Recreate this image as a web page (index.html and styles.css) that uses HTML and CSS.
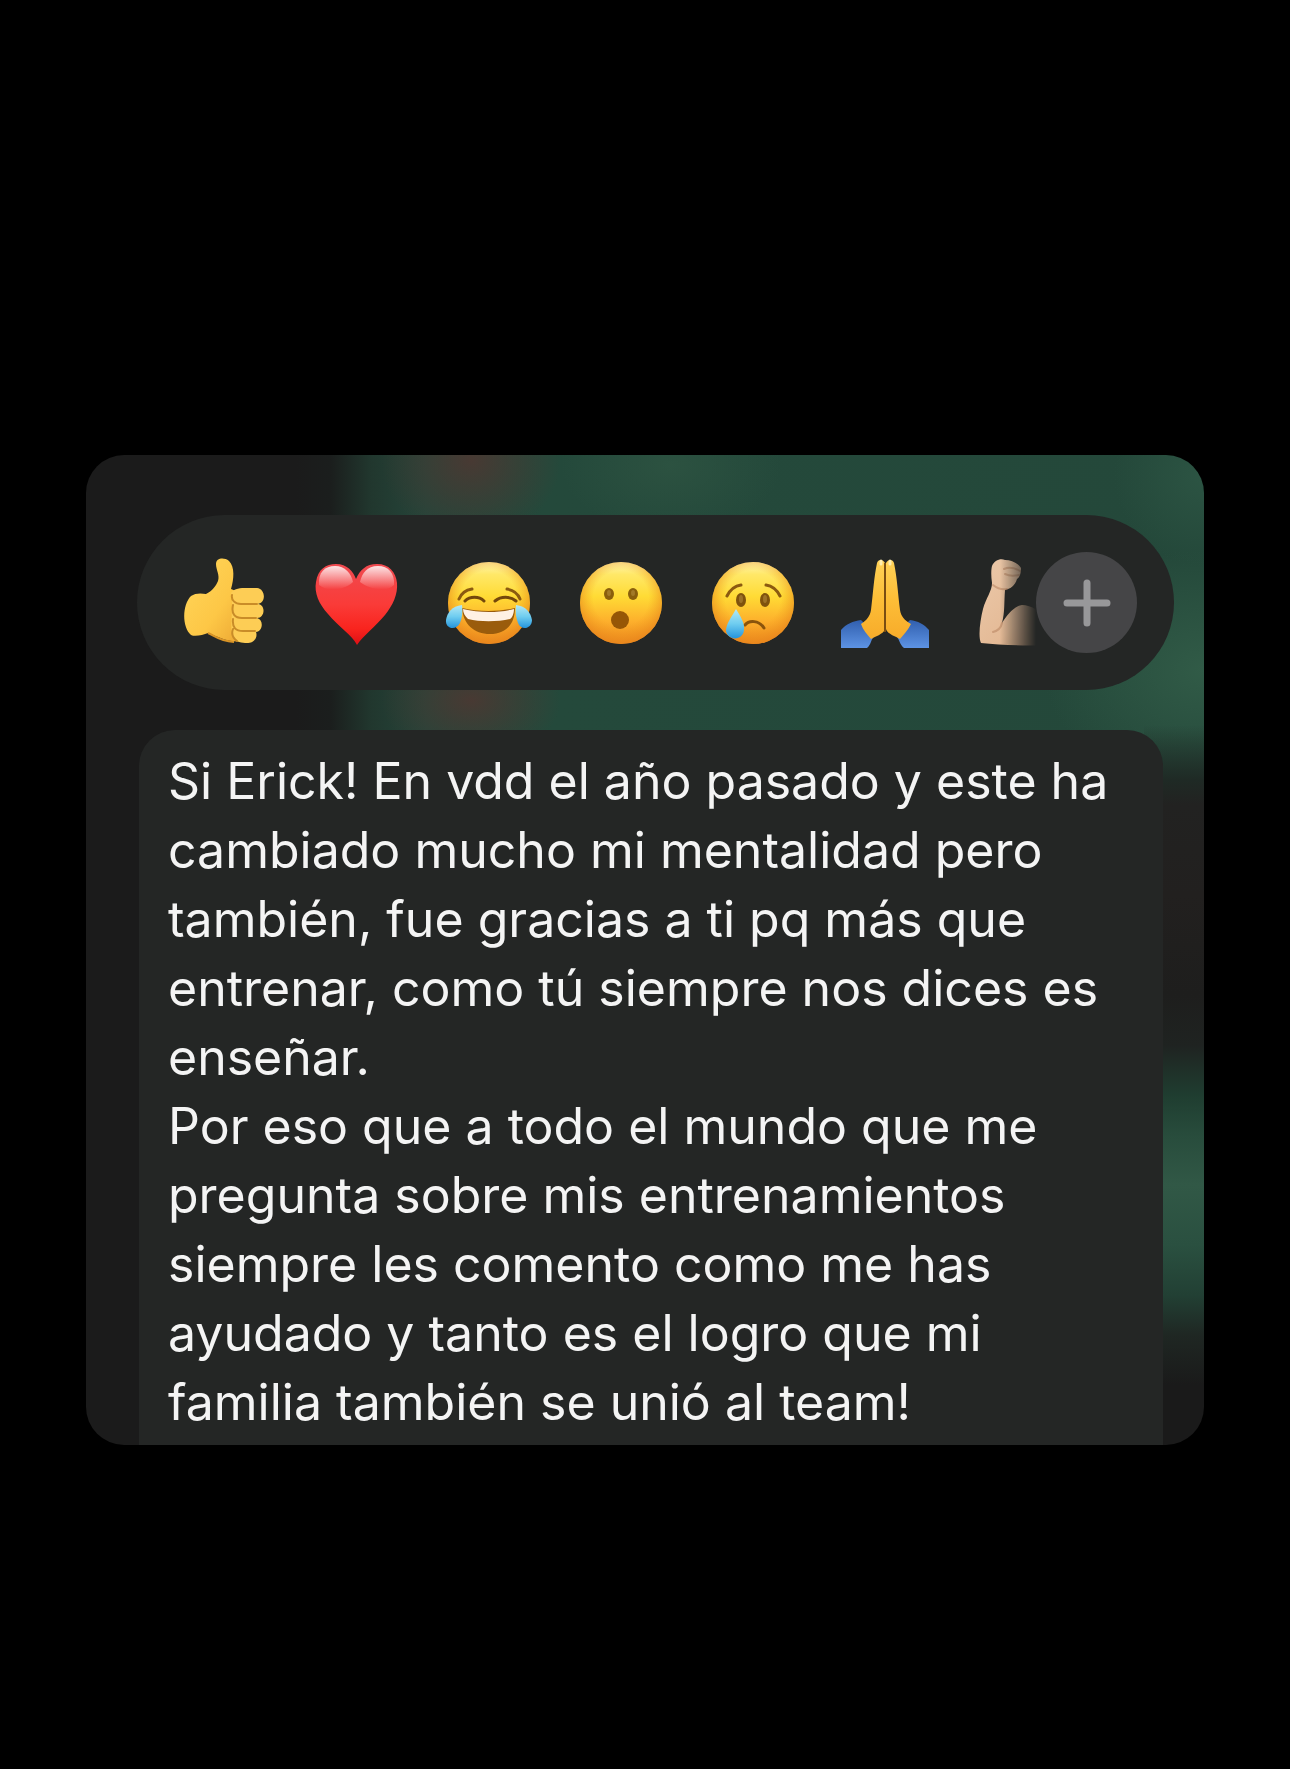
FILE: index.html
```html
<!DOCTYPE html>
<html lang="es">
	<head>
		<meta charset="utf-8" />
		<meta name="viewport" content="width=device-width, initial-scale=1" />
		<title>Mensaje</title>
		<link rel="stylesheet" href="styles.css">
	</head>
	<body>
		<!-- shared gradients -->
		<svg class="defs" width="0" height="0" aria-hidden="true">
			<defs>
				<linearGradient id="face" x1="0" y1="0" x2="0" y2="1">
					<stop offset="0" stop-color="#fff6b4" />
					<stop offset=".15" stop-color="#ffe868" />
					<stop offset=".42" stop-color="#ffdb35" />
					<stop offset=".72" stop-color="#fdb02c" />
					<stop offset="1" stop-color="#ee8a20" />
				</linearGradient>
				<radialGradient id="edge" cx=".5" cy=".44" r=".56">
					<stop offset=".6" stop-color="#f09a1c" stop-opacity="0" />
					<stop offset="1" stop-color="#e8851c" stop-opacity=".8" />
				</radialGradient>
				<linearGradient id="tear" x1="0" y1="0" x2="0" y2="1">
					<stop offset="0" stop-color="#b4e9f5" />
					<stop offset=".5" stop-color="#6fcdf0" />
					<stop offset="1" stop-color="#2594dc" />
				</linearGradient>
				<linearGradient id="hand" x1="0" y1="0" x2="1" y2="1">
					<stop offset="0" stop-color="#ffd75c" />
					<stop offset=".6" stop-color="#fdc746" />
					<stop offset="1" stop-color="#eba532" />
				</linearGradient>
				<linearGradient id="heart" x1="0" y1="0" x2="0" y2="1">
					<stop offset="0" stop-color="#f04a50" />
					<stop offset=".5" stop-color="#fa3b38" />
					<stop offset=".8" stop-color="#f9241e" />
					<stop offset="1" stop-color="#dd1015" />
				</linearGradient>
				<linearGradient id="shine" x1="0" y1="0" x2="0" y2="1">
					<stop offset="0" stop-color="#fff" stop-opacity=".85" />
					<stop offset="1" stop-color="#fff" stop-opacity="0" />
				</linearGradient>
				<linearGradient id="palm" x1="0" y1="0" x2="0" y2="1">
					<stop offset="0" stop-color="#ffd257" />
					<stop offset=".5" stop-color="#fdbe37" />
					<stop offset="1" stop-color="#f7ab2a" />
				</linearGradient>
				<linearGradient id="sleeve" x1="0" y1="0" x2="0" y2="1">
					<stop offset="0" stop-color="#315fae" />
					<stop offset="1" stop-color="#5d93e4" />
				</linearGradient>
				<linearGradient id="skin" x1="0" y1="0" x2="1" y2="1">
					<stop offset="0" stop-color="#ecc9aa" />
					<stop offset=".6" stop-color="#e4ba96" />
					<stop offset="1" stop-color="#c99c76" />
				</linearGradient>
			</defs>
		</svg>

		<main class="card">
			<div class="bar">
				<div class="reactions">
					<button class="emoji" type="button" aria-label="Me gusta">
						<svg viewBox="0 0 96 96">
							<path d="M14 41C18 38 24 38 29 39C35 36 39 31 41 26C43 20 39 15 39 9C39 3 47 2 52 6C58 12 57 24 54 34C61 36 65 42 67 50L66 86C59 87 52 86 46 84C40 82 35 79 31 78C26 80 18 82 14 80C5 72 5 50 14 41Z" fill="url(#hand)" />
							<path d="M54 38C58 33 63 33 70 33L80 33C89 34 89 48 81 49C89 50 88 63 80 63C87 65 86 76 79 77C81 82 77 89 70 88C65 88 59 87 56 83C52 71 57 53 54 38Z" fill="#fdcd55" />
							<path d="M55 40C54 45 58 49 64 49H80M56 50C54 59 58 63 65 63H79M56 64C55 73 59 76 66 76H78M56 74C54 79 56 83 60 86" fill="none" stroke="#c98c28" stroke-width="2" stroke-linecap="round" />
							<path d="M31 78C38 81 42 86 57 87" fill="none" stroke="#d99426" stroke-width="2" />
						</svg>
					</button>
					<button class="emoji" type="button" aria-label="Me encanta">
						<svg viewBox="0 0 96 96">
							<path d="M48 90C43 80 30 72 19 59C10 49 5 38 7 27C9 14 17 9 27 9C38 9 44 16 47 24C51 15 57 9 68 9C80 9 87 17 88 28C89 39 84 50 76 60C67 71 54 81 48 90Z" fill="url(#heart)" />
							<path d="M10 30C9 17 16 11 26 11C36 11 42 18 44 27C37 34 20 38 10 30Z" fill="url(#shine)" />
							<path d="M51 27C53 18 58 11 69 11C79 11 86 18 85 30C77 38 60 34 51 27Z" fill="url(#shine)" />
						</svg>
					</button>
					<button class="emoji" type="button" aria-label="Me divierte">
						<svg viewBox="0 0 96 96">
							<circle cx="48" cy="48" r="41" fill="url(#face)" />
							<circle cx="48" cy="48" r="41" fill="url(#edge)" />
							<path d="M18 44C20 39 25 35 31 34M66 34C72 35 77 39 79 44" fill="none" stroke="#8b5a10" stroke-width="3" stroke-linecap="round" />
							<path d="M24 46C29 41 38 41 43 46M54 46C60 41 69 41 75 46" fill="none" stroke="#74480b" stroke-width="3" stroke-linecap="round" />
							<path d="M21 53C37 57 58 57 74 53C74 70 64 79 49 79C33 79 22 69 21 53Z" fill="#9a5c0c" />
							<path d="M22 54C38 58 58 58 73 54C73 59 71 63 69 64C56 67 39 67 27 64C24 61 22 58 22 54Z" fill="#fff1e4" />
							<path d="M21 50C11 51 6 58 5 65C4 74 15 76 19 68C21 63 22 57 21 50Z" fill="url(#tear)" />
							<path d="M75 50C85 51 90 58 91 65C91 74 80 76 77 68C75 63 74 57 75 50Z" fill="url(#tear)" />
						</svg>
					</button>
					<button class="emoji" type="button" aria-label="Me asombra">
						<svg viewBox="0 0 96 96">
							<circle cx="48" cy="48" r="41" fill="url(#face)" />
							<circle cx="48" cy="48" r="41" fill="url(#edge)" />
							<ellipse cx="36" cy="39" rx="5" ry="6" fill="#8a5f0c" />
							<ellipse cx="60" cy="39" rx="5" ry="6" fill="#8a5f0c" />
							<ellipse cx="36" cy="38" rx="2" ry="3" fill="#a27a28" />
							<ellipse cx="60" cy="38" rx="2" ry="3" fill="#a27a28" />
							<circle cx="47" cy="65" r="9" fill="#965606" />
						</svg>
					</button>
					<button class="emoji" type="button" aria-label="Me entristece">
						<svg viewBox="0 0 96 96">
							<circle cx="48" cy="48" r="41" fill="url(#face)" />
							<circle cx="48" cy="48" r="41" fill="url(#edge)" />
							<path d="M22 41C25 35 29 31 36 30M61 30C68 31 72 35 75 41" fill="none" stroke="#8b5a10" stroke-width="3" stroke-linecap="round" />
							<ellipse cx="36" cy="45" rx="5" ry="7" fill="#7f520d" />
							<ellipse cx="60" cy="45" rx="5" ry="7" fill="#7f520d" />
							<ellipse cx="36" cy="44" rx="2" ry="4" fill="#9d7228" />
							<ellipse cx="60" cy="44" rx="2" ry="4" fill="#9d7228" />
							<path d="M40 70C44 65 54 65 59 73" fill="none" stroke="#8a540c" stroke-width="3" stroke-linecap="round" />
							<path d="M31 54C36 62 40 69 39 75C38 86 23 86 21 76C21 69 26 63 31 54Z" fill="url(#tear)" />
						</svg>
					</button>
					<button class="emoji" type="button" aria-label="Gracias">
						<svg viewBox="0 0 96 96">
							<path d="M4 75C9 69 16 66 24 65L39 80C33 84 35 89 30 93H4Z" fill="url(#sleeve)" />
							<path d="M92 75C87 69 81 66 73 65L58 80C63 84 62 89 67 93H92Z" fill="url(#sleeve)" />
							<path d="M40 8C41 4 46 4 48 8V74C47 79 37 82 34 84C30 79 26 75 24 69C30 65 33 61 34 55C36 39 37 22 40 8Z" fill="url(#palm)" />
							<path d="M57 8C56 4 51 4 49 8V74C50 79 60 82 63 84C67 79 71 75 74 69C67 65 64 61 63 55C61 39 60 22 57 8Z" fill="url(#palm)" />
							<path d="M48 8V77" stroke="#7a4d12" stroke-width="2" />
							<path d="M44 9V6M53 9V6" stroke="#ffeeb0" stroke-width="3" stroke-linecap="round" />
						</svg>
					</button>
					<button class="emoji" type="button" aria-label="Fuerza">
						<svg viewBox="0 0 96 96">
							<path d="M23 11C25 6 31 3 36 5C43 5 50 9 52 13C52 18 51 22 48 24C46 31 41 34 36 35C35 47 36 57 33 68C38 60 45 51 53 50C68 50 84 66 88 89C65 92 34 90 12 88C9 82 11 66 14 54C17 43 23 36 23 28C22 21 22 15 23 11Z" fill="url(#skin)" />
							<path d="M35 14C41 11 46 13 51 16M36 19C40 21 45 21 50 20M24 30C29 34 33 35 38 34M33 68C32 73 28 76 24 77" fill="none" stroke="#a56c49" stroke-width="2" stroke-linecap="round" opacity=".4" />
						</svg>
					</button>
				</div>
				<button class="more" type="button" aria-label="Más reacciones">
					<svg viewBox="0 0 48 48">
						<path d="M24 4V44M4 24H44" stroke="#98989a" stroke-width="7" stroke-linecap="round" />
					</svg>
				</button>
			</div>

			<article class="message">
				<p>Si Erick! En vdd el año pasado y este ha cambiado mucho mi mentalidad pero también, fue gracias a ti pq más que entrenar, como tú siempre nos dices es enseñar.</p>
				<p>Por eso que a todo el mundo que me pregunta sobre mis entrenamientos siempre les comento como me has ayudado y tanto es el logro que mi familia también se unió al team!</p>
			</article>
		</main>
	</body>
</html>
```

FILE: styles.css
```css
*{
	margin: 0;
	padding: 0;
	box-sizing: border-box;
}
body{
	background: #000;
	color: #f4f4f4;
	font-family: Inter, "Liberation Sans", sans-serif;
	padding: 455px 86px 324px;
}
button{
	border: none;
	background: none;
	cursor: pointer;
}
svg{
	display: block;
}
.defs{
	position: absolute;
}

/* blurred chat wallpaper behind the message */
.card{
	border-radius: 38px;
	overflow: hidden;
	padding: 60px 30px 0 51px;
	background:
		linear-gradient(180deg, transparent 270px, #1f2a25 325px, #222221 350px, #22201f 440px, #1e1e1d 540px, #1f2321 590px, #1f3d30 640px, #284c3c 680px, #315846 730px, #2a5040 790px, #224034 840px, #1f2723 880px, #1a1a1a 930px) right top / 60px 100% no-repeat,
		radial-gradient(ellipse 90px 80px at 385px 5px, rgba(76, 56, 50, .9) 0%, rgba(76, 56, 50, 0) 100%),
		radial-gradient(ellipse 90px 60px at 385px 245px, rgba(76, 56, 50, .9) 0%, rgba(76, 56, 50, 0) 100%),
		radial-gradient(ellipse 110px 70px at 585px 10px, rgba(46, 84, 66, .8) 0%, rgba(46, 84, 66, 0) 100%),
		radial-gradient(ellipse 90px 90px at 100% 20px, #2c5443 0%, rgba(44, 84, 67, 0) 100%),
		radial-gradient(ellipse 160px 120px at 100% 215px, #315b47 0%, rgba(49, 91, 71, 0) 100%),
		linear-gradient(90deg, #1b1b1b 210px, #1b1e1d 245px, #21372e 285px, #25453a 340px, #24493b 460px, #24483a 100%);
}

.bar{
	display: flex;
	align-items: center;
	height: 175px;
	padding: 0 37px 0 40px;
	border-radius: 88px;
	background: #242625;
}
.reactions{
	display: flex;
	flex: 1;
	gap: 36px;
	min-width: 0;
	overflow: hidden;
	/* last emoji fades out under the plus button */
	-webkit-mask-image: linear-gradient(90deg, #000 calc(100% - 36px), transparent 100%);
	mask-image: linear-gradient(90deg, #000 calc(100% - 36px), transparent 100%);
}
.emoji{
	flex: none;
	width: 96px;
	height: 96px;
}
.more{
	flex: none;
	display: flex;
	align-items: center;
	justify-content: center;
	width: 101px;
	height: 101px;
	border-radius: 50%;
	background: #454547;
}
.more svg{
	width: 48px;
	height: 48px;
}

.message{
	margin: 40px 11px 0 2px;
	padding: 17px 24px 8px 29px;
	border-radius: 36px 36px 0 0;
	background: #242625;
	font-size: 50px;
	line-height: 69px;
}
```
